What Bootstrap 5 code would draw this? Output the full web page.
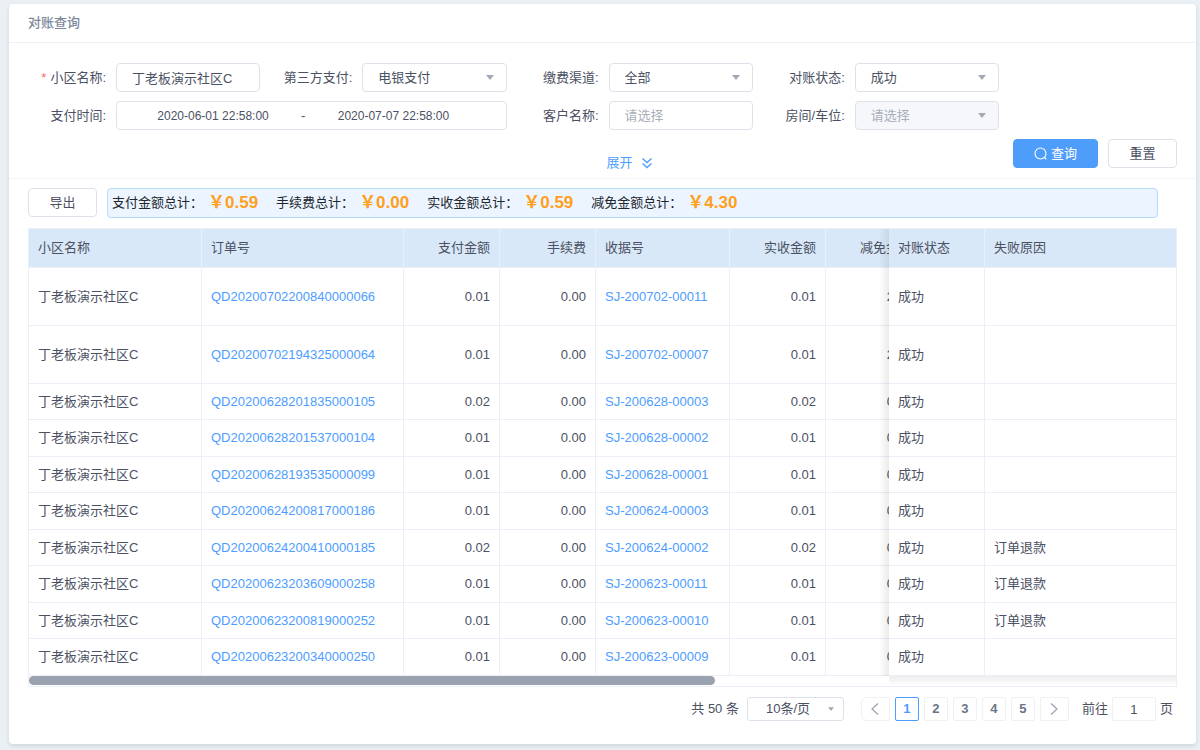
<!DOCTYPE html>
<html lang="zh-CN">
<head>
<meta charset="utf-8">
<meta name="viewport" content="width=device-width, initial-scale=1">
<title>对账查询</title>
<link href="https://cdn.jsdelivr.net/npm/bootstrap@5.3.0/dist/css/bootstrap.min.css" rel="stylesheet">
<style>
  :root { --ink: #4b5163; --line: #dde2ea; --soft: #eceff7; --blue: #4d9dff; }
  body { background: #eaf0f4; color: var(--ink); font: 13px/20px "Liberation Sans", "Noto Sans CJK SC", sans-serif; padding: 4px 4px 7px 9px; }
  a { color: var(--blue); text-decoration: none; }
  .panel { background: #fff; border-radius: 4px; box-shadow: 0 2px 4px rgba(60, 80, 100, .16); }
  .panel-title { font-size: 13px; line-height: 20px; color: #7d879b; padding: 9px 19px; border-bottom: 1px solid #edf0f5; margin: 0; }

  /* query form */
  .query { display: grid; grid-template-columns: repeat(4, minmax(0, 5fr)) 4fr; row-gap: 9px; padding: 20px 0 0 5px; border-bottom: 1px solid #f3f5f8; }
  .field { display: flex; align-items: center; gap: 10px; }
  .field.wide { grid-column: span 2; }
  .field > label { flex: 0 0 92px; text-align: right; white-space: nowrap; }
  .req::before { content: "*"; color: #f56c6c; margin-right: 4px; }
  .form-control, .form-select { font-size: 13px; line-height: 20px; height: 29px; min-width: 0; padding: 3px 15px; border-color: var(--line); border-radius: 4px; color: var(--ink); }
  .form-control::placeholder { color: #a9afba; }
  .form-select { background-image: url("data:image/svg+xml,%3Csvg xmlns='http://www.w3.org/2000/svg' viewBox='0 0 8 5'%3E%3Cpath d='M0 0h8L4 5z' fill='%23a3a9b4'/%3E%3C/svg%3E"); background-size: 8px 5px; background-position: right 12px center; }
  .form-select:disabled { background-color: #f5f7fb; color: #a9afba; opacity: 1; }
  .date-range { flex: 1; height: 29px; border: 1px solid var(--line); border-radius: 4px; display: flex; align-items: center; padding: 0 24px 0 8px; }
  .date-range input { flex: 1; min-width: 0; border: 0; background: none; outline: 0; text-align: center; font-size: 12px; color: var(--ink); }
  .expand { grid-column: 3; align-self: end; justify-self: center; padding-bottom: 5px; }
  .actions { grid-column: 4 / 6; display: flex; justify-content: flex-end; gap: 10px; padding: 0 19px 10px 0; }
  .btn { font-size: 13px; line-height: 20px; }
  .btn-box { height: 29px; padding: 3px 20px; border-color: var(--line); color: var(--ink); background: #fff; border-radius: 4px; min-width: 69px; }
  .btn-query { background: #4f9dfb; border-color: #4f9dfb; color: #fff; min-width: 85px; }

  /* totals */
  .content { padding: 9px 19px 23px; }
  .totals-row { gap: 10px; }
  .totals { flex: 1; margin-right: 19px; background: #ecf5ff; border: 1px solid #b5dcfd; border-radius: 4px; color: #22262e; min-height: 30px; padding: 0 4px; column-gap: 18px; }
  .totals dl { margin: 0; display: flex; align-items: center; gap: 5px; line-height: 28px; }
  .totals dt { font-weight: 400; }
  .totals dd { margin: 0; color: #ff9f1d; font-size: 17px; font-weight: 700; }

  /* record table */
  .record-frame { border: 1px solid var(--soft); margin-top: 10px; }
  .record-scroll { overflow-x: auto; scrollbar-width: none; }
  .record-scroll::-webkit-scrollbar { display: none; }
  .records { table-layout: fixed; width: 1924px; border-collapse: separate; border-spacing: 0; }
  .records th, .records td { height: 36px; padding: 0 9px; border-right: 1px solid var(--soft); border-bottom: 1px solid var(--soft); white-space: nowrap; background: #fff; font-weight: 400; }
  .records tbody tr:nth-child(even) td { height: 37px; }
  .records tbody tr.tall td { height: 58px; }
  .records thead th { height: 39px; background: #d9e8f8; }
  .records .pin-a, .records .pin-b { position: sticky; z-index: 2; }
  .records .pin-a { right: 191px; }
  .records .pin-b { right: 0; border-right: 0; }
  .records .pin-a::before { content: ""; position: absolute; top: 0; bottom: -1px; left: -10px; width: 10px; background: linear-gradient(to left, rgba(0,0,0,.08), transparent); }
  .track { height: 10px; display: flex; justify-content: space-between; }
  .thumb { height: 9px; border-radius: 5px; background: #9ba2af; }
  .pin-shade { width: 287px; background: linear-gradient(rgba(0,0,0,.07), transparent); }

  /* pager */
  .pager { margin-top: 10px; padding-right: 4px; }
  .pager .form-select { width: 97px; height: 24px; padding: 0 24px 0 18px; border-radius: 3px; background-size: 6px 4px; background-position: right 9px center; }
  .pager .form-control { width: 44px; height: 24px; padding: 0 4px; text-align: center; border-color: #edf0f5; border-radius: 2px; }
  .pager .pagination { gap: 5px; margin: 0 13px 0 17px; }
  .pager .page-item:not(:first-child) .page-link, .pager .page-link { margin: 0; border-radius: 2px; }
  .pager .page-link { width: 24px; height: 24px; padding: 0; line-height: 22px; font-size: 13px; font-weight: 700; color: #6b7486; border: 1px solid #edf1f5; display: flex; align-items: center; justify-content: center; }
  .pager .page-link.arrow { width: 29px; }
  .pager .active .page-link { background: #fff; color: var(--blue); border-color: var(--blue); }
  @media (max-width: 991px) {
    .query { grid-template-columns: repeat(2, minmax(0, 1fr)); padding-right: 19px; }
    .expand { grid-column: 1; } .actions { grid-column: 2; padding-right: 0; }
    .pager { flex-wrap: wrap; row-gap: 8px; }
  }
</style>
</head>
<body>
<main class="panel">
  <h1 class="panel-title">对账查询</h1>

  <form class="query">
    <div class="field"><label class="req" for="community">小区名称:</label><input class="form-control" id="community" value="丁老板演示社区C"></div>
    <div class="field"><label for="third">第三方支付:</label><select class="form-select" id="third"><option>电银支付</option></select></div>
    <div class="field"><label for="channel">缴费渠道:</label><select class="form-select" id="channel"><option>全部</option></select></div>
    <div class="field"><label for="status">对账状态:</label><select class="form-select" id="status"><option>成功</option></select></div>
    <div class="field wide" style="grid-column: 1 / 3"><label for="from">支付时间:</label>
      <div class="date-range"><input id="from" value="2020-06-01 22:58:00"><label for="to">-</label><input id="to" value="2020-07-07 22:58:00"></div>
    </div>
    <div class="field"><label for="customer">客户名称:</label><input class="form-control" id="customer" placeholder="请选择"></div>
    <div class="field"><label for="room">房间/车位:</label><select class="form-select" id="room" disabled><option>请选择</option></select></div>
    <a class="expand d-inline-flex align-items-center gap-2" href="#">展开
      <svg width="12" height="12" viewBox="0 0 12 12" fill="none" stroke="currentColor" stroke-width="1.4"><path d="M1.500 1.500L6 5.500l4.500-4M1.500 6.500L6 10.500l4.500-4"/></svg></a>
    <div class="actions">
      <button type="button" class="btn btn-box btn-query d-inline-flex align-items-center justify-content-center gap-1 px-2">
        <svg width="13" height="13" viewBox="0 0 13 13" fill="none" stroke="currentColor" stroke-width="1.1"><circle cx="6.5" cy="6.5" r="5.5"/><path d="M10 10l2.3 2.3"/></svg>查询</button>
      <button type="reset" class="btn btn-box">重置</button>
    </div>
  </form>

  <section class="content">
    <div class="totals-row d-flex align-items-start">
      <button type="button" class="btn btn-box">导出</button>
      <div class="totals d-flex flex-wrap align-items-center">
        <dl><dt>支付金额总计：</dt><dd>￥0.59</dd></dl>
        <dl><dt>手续费总计：</dt><dd>￥0.00</dd></dl>
        <dl><dt>实收金额总计：</dt><dd>￥0.59</dd></dl>
        <dl><dt>减免金额总计：</dt><dd>￥4.30</dd></dl>
      </div>
    </div>

    <div class="record-frame">
      <div class="record-scroll">
        <table class="records">
          <colgroup><col style="width:173px"><col style="width:202px"><col style="width:96px"><col style="width:96px"><col style="width:134px"><col style="width:96px"><col style="width:96px"><col><col style="width:96px"><col style="width:191px"></colgroup>
          <thead><tr><th>小区名称</th><th>订单号</th><th class="text-end">支付金额</th><th class="text-end">手续费</th><th>收据号</th><th class="text-end">实收金额</th><th class="text-end">减免金额</th><th></th><th class="pin-a">对账状态</th><th class="pin-b">失败原因</th></tr></thead>
          <tbody>
            <tr class="tall"><td>丁老板演示社区C</td><td><a href="#">QD20200702200840000066</a></td><td class="text-end">0.01</td><td class="text-end">0.00</td><td><a href="#">SJ-200702-00011</a></td><td class="text-end">0.01</td><td class="text-end">2.15</td><td></td><td class="pin-a">成功</td><td class="pin-b"></td></tr>
            <tr class="tall"><td>丁老板演示社区C</td><td><a href="#">QD20200702194325000064</a></td><td class="text-end">0.01</td><td class="text-end">0.00</td><td><a href="#">SJ-200702-00007</a></td><td class="text-end">0.01</td><td class="text-end">2.15</td><td></td><td class="pin-a">成功</td><td class="pin-b"></td></tr>
            <tr><td>丁老板演示社区C</td><td><a href="#">QD20200628201835000105</a></td><td class="text-end">0.02</td><td class="text-end">0.00</td><td><a href="#">SJ-200628-00003</a></td><td class="text-end">0.02</td><td class="text-end">0.00</td><td></td><td class="pin-a">成功</td><td class="pin-b"></td></tr>
            <tr><td>丁老板演示社区C</td><td><a href="#">QD20200628201537000104</a></td><td class="text-end">0.01</td><td class="text-end">0.00</td><td><a href="#">SJ-200628-00002</a></td><td class="text-end">0.01</td><td class="text-end">0.00</td><td></td><td class="pin-a">成功</td><td class="pin-b"></td></tr>
            <tr><td>丁老板演示社区C</td><td><a href="#">QD20200628193535000099</a></td><td class="text-end">0.01</td><td class="text-end">0.00</td><td><a href="#">SJ-200628-00001</a></td><td class="text-end">0.01</td><td class="text-end">0.00</td><td></td><td class="pin-a">成功</td><td class="pin-b"></td></tr>
            <tr><td>丁老板演示社区C</td><td><a href="#">QD20200624200817000186</a></td><td class="text-end">0.01</td><td class="text-end">0.00</td><td><a href="#">SJ-200624-00003</a></td><td class="text-end">0.01</td><td class="text-end">0.00</td><td></td><td class="pin-a">成功</td><td class="pin-b"></td></tr>
            <tr><td>丁老板演示社区C</td><td><a href="#">QD20200624200410000185</a></td><td class="text-end">0.02</td><td class="text-end">0.00</td><td><a href="#">SJ-200624-00002</a></td><td class="text-end">0.02</td><td class="text-end">0.00</td><td></td><td class="pin-a">成功</td><td class="pin-b">订单退款</td></tr>
            <tr><td>丁老板演示社区C</td><td><a href="#">QD20200623203609000258</a></td><td class="text-end">0.01</td><td class="text-end">0.00</td><td><a href="#">SJ-200623-00011</a></td><td class="text-end">0.01</td><td class="text-end">0.00</td><td></td><td class="pin-a">成功</td><td class="pin-b">订单退款</td></tr>
            <tr><td>丁老板演示社区C</td><td><a href="#">QD20200623200819000252</a></td><td class="text-end">0.01</td><td class="text-end">0.00</td><td><a href="#">SJ-200623-00010</a></td><td class="text-end">0.01</td><td class="text-end">0.00</td><td></td><td class="pin-a">成功</td><td class="pin-b">订单退款</td></tr>
            <tr><td>丁老板演示社区C</td><td><a href="#">QD20200623200340000250</a></td><td class="text-end">0.01</td><td class="text-end">0.00</td><td><a href="#">SJ-200623-00009</a></td><td class="text-end">0.01</td><td class="text-end">0.00</td><td></td><td class="pin-a">成功</td><td class="pin-b"></td></tr>
          </tbody>
        </table>
      </div>
      <div class="track"><div class="thumb" style="width: 59.8%"></div><div class="pin-shade"></div></div>
    </div>

    <div class="pager d-flex align-items-center justify-content-end">
      <label for="size" class="me-2">共 50 条</label>
      <select class="form-select" id="size"><option>10条/页</option></select>
      <ul class="pagination">
        <li class="page-item"><a class="page-link arrow" href="#" aria-label="上一页"><svg width="8" height="12" viewBox="0 0 8 12" fill="none" stroke="#9aa1ad" stroke-width="1.2"><path d="M7 .5L1 6l6 5.500"/></svg></a></li>
        <li class="page-item active"><a class="page-link" href="#">1</a></li>
        <li class="page-item"><a class="page-link" href="#">2</a></li>
        <li class="page-item"><a class="page-link" href="#">3</a></li>
        <li class="page-item"><a class="page-link" href="#">4</a></li>
        <li class="page-item"><a class="page-link" href="#">5</a></li>
        <li class="page-item"><a class="page-link arrow" href="#" aria-label="下一页"><svg width="8" height="12" viewBox="0 0 8 12" fill="none" stroke="#9aa1ad" stroke-width="1.2"><path d="M1 .5L7 6l-6 5.500"/></svg></a></li>
      </ul>
      <label for="goto" class="me-1">前往</label>
      <input class="form-control" id="goto" value="1">
      <span class="ms-1">页</span>
    </div>
  </section>
</main>
<script src="https://cdn.jsdelivr.net/npm/bootstrap@5.3.0/dist/js/bootstrap.bundle.min.js"></script>
</body>
</html>
